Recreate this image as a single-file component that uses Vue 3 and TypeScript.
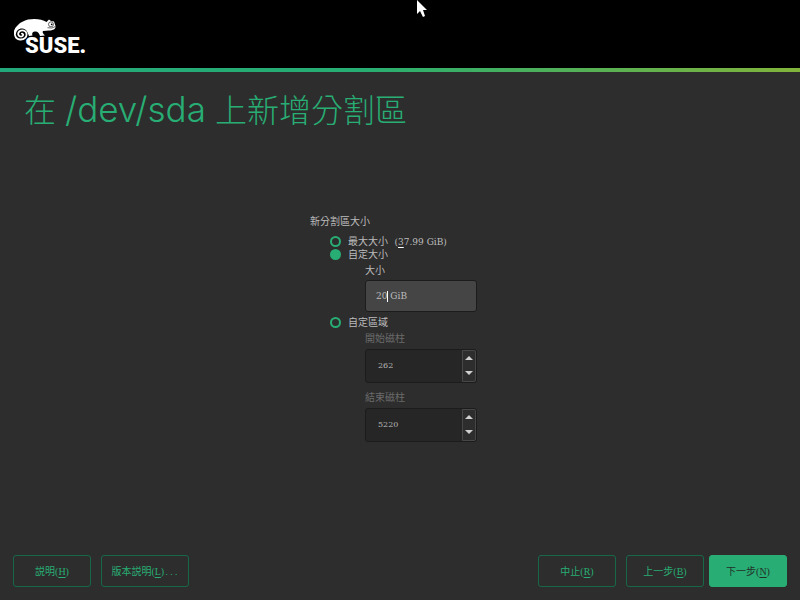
<script setup lang="ts">
import { ref } from 'vue'

type Mode = 'max' | 'size' | 'region'

const mode = ref<Mode>('size')
const size = ref('20 GiB')
const start = ref(262)
const end = ref(5220)
</script>

<template>
  <div class="installer">
    <header class="banner">
      <svg class="logo" width="76" height="40" viewBox="0 0 76 40" role="img" aria-label="SUSE">
        <path
          fill="#fff"
          d="M0 16C0 9 6 3.500 14 1.500C21 0.300 28 1 32.500 4L35 1.500L37 3L40 3.500L41.500 8C42 11 39 12.500 35 12.500L29 13C28 14 29 16 31 17.500L26 18C25 15 24 13.500 21.500 13.500C19 13.500 17.500 15 18.500 17.500L15 18L13.500 14.500C12 11.500 10.500 10.500 8 10.500C4.500 10.500 2 13 2 16Z"
        />
        <path
          fill="none"
          stroke="#fff"
          stroke-width="1.800"
          stroke-linecap="round"
          d="M2.500 10C-0.500 14.500 0.500 21 6 21.500C10.500 21.800 13 19 12.500 15.500C12 12.500 8 11.600 5.500 13.300C3 15.500 4.500 18.800 7.200 18.700C9.600 18.500 9.800 15.900 7.900 15.700"
        />
        <circle cx="37" cy="6.300" r="2.500" fill="none" stroke="#000" stroke-width="0.600" />
        <circle cx="37.700" cy="6.300" r="0.900" fill="#000" />
        <path d="M33.500 9.700Q38 11 41.500 8.500" fill="none" stroke="#000" stroke-width="0.600" />
        <text class="wordmark" x="11" y="35">SUSE.</text>
      </svg>
    </header>
    <div class="stripe"></div>

    <h1>在 <span class="device">/dev/sda</span> 上新增分割區</h1>

    <main>
      <fieldset>
        <legend>新分割區大小</legend>
        <div class="options">
          <label class="option">
            <input v-model="mode" type="radio" name="mode" value="max" />
            <span>最大大小 <span class="amount">(<u>3</u>7.99 GiB)</span></span>
          </label>
          <label class="option">
            <input v-model="mode" type="radio" name="mode" value="size" />
            <span>自定大小</span>
          </label>
          <div class="detail">
            <label class="caption" for="size">大小</label>
            <div class="field">
              <input id="size" v-model="size" class="text" type="text" />
              <i class="caret"></i>
            </div>
          </div>
          <label class="option">
            <input v-model="mode" type="radio" name="mode" value="region" />
            <span>自定區域</span>
          </label>
          <div class="detail region">
            <label class="caption dim" for="start">開始磁柱</label>
            <div class="spin">
              <input id="start" v-model.number="start" type="number" :disabled="mode !== 'region'" />
              <div class="steps">
                <button type="button" aria-label="+" :disabled="mode !== 'region'" @click="start++">
                  <svg width="8" height="4" viewBox="0 0 8 4"><path d="M0 4L4 0L8 4Z" /></svg>
                </button>
                <button type="button" aria-label="-" :disabled="mode !== 'region'" @click="start--">
                  <svg width="8" height="4" viewBox="0 0 8 4"><path d="M0 0L4 4L8 0Z" /></svg>
                </button>
              </div>
            </div>
          </div>
          <div class="detail region last">
            <label class="caption dim" for="end">結束磁柱</label>
            <div class="spin">
              <input id="end" v-model.number="end" type="number" :disabled="mode !== 'region'" />
              <div class="steps">
                <button type="button" aria-label="+" :disabled="mode !== 'region'" @click="end++">
                  <svg width="8" height="4" viewBox="0 0 8 4"><path d="M0 4L4 0L8 4Z" /></svg>
                </button>
                <button type="button" aria-label="-" :disabled="mode !== 'region'" @click="end--">
                  <svg width="8" height="4" viewBox="0 0 8 4"><path d="M0 0L4 4L8 0Z" /></svg>
                </button>
              </div>
            </div>
          </div>
        </div>
      </fieldset>
    </main>

    <footer>
      <div class="group">
        <button type="button" class="action">説明(<u>H</u>)</button>
        <button type="button" class="action wide">版本説明(<u>L</u>)<span class="dots">...</span></button>
      </div>
      <div class="group">
        <button type="button" class="action">中止(<u>R</u>)</button>
        <div class="group steps-nav">
          <button type="button" class="action">上一步(<u>B</u>)</button>
          <button type="button" class="action primary">下一步(<u>N</u>)</button>
        </div>
      </div>
    </footer>

    <svg class="pointer" width="10" height="17" viewBox="0 0 10 17" aria-hidden="true">
      <path d="M0 0V14L3 11L6 17L8 16L6 10H10Z" fill="#fff" />
    </svg>
  </div>
</template>

<style>
body {
  margin: 0;
  background: #2d2d2d;
}
</style>

<style scoped>
.installer {
  position: relative;
  display: flex;
  flex-direction: column;
  box-sizing: border-box;
  min-height: 100vh;
  background: #2d2d2d;
  color: #bcbcbc;
  font: 10px/13px "Liberation Serif", "Noto Sans CJK TC", serif;
}
.installer * {
  box-sizing: border-box;
}
.banner {
  padding: 18px 14px 10px;
  background: #000;
}
.logo {
  display: block;
}
.wordmark {
  fill: #fff;
  font: 900 22px Roboto, sans-serif;
}
.stripe {
  height: 4px;
  background: linear-gradient(90deg, #22a97b, #27ae72 45%, #82b43b);
}
h1 {
  margin: 0;
  padding: 17px 24px 0;
  color: #28ae74;
  font: 300 32px/40px Inter, "Noto Sans CJK TC", sans-serif;
}
.device {
  font-size: 35px;
}
main {
  display: flex;
  flex: 1;
  align-items: center;
  justify-content: center;
}
fieldset {
  width: 180px;
  min-width: 0;
  margin: 0;
  padding: 0;
  border: 0;
}
legend {
  padding: 0;
}
.options {
  padding: 7px 0 0 20px;
}
.option {
  display: flex;
  align-items: center;
  gap: 7px;
  white-space: nowrap;
}
.option input {
  appearance: none;
  width: 11px;
  height: 11px;
  margin: 0;
  border: 2px solid #28ae74;
  border-radius: 50%;
}
.option input:checked {
  background: #28ae74;
}
.amount {
  padding-left: 4px;
  font-family: "DejaVu Serif", serif;
  font-size: 9px;
  line-height: 9px;
}
u {
  text-decoration-thickness: 1px;
  text-underline-offset: 2px;
}
.amount u {
  text-decoration-color: #fff;
}
.detail {
  padding: 3px 13px 4px 35px;
}
.region {
  padding-bottom: 5px;
}
.last {
  padding-bottom: 0;
}
.caption {
  display: block;
  margin-bottom: 3px;
}
.region .caption {
  margin-bottom: 4px;
}
.dim {
  color: #6b6b6b;
}
.field {
  position: relative;
}
.text {
  display: block;
  width: 100%;
  height: 32px;
  padding: 0 10px;
  border: 1px solid #1c1c1c;
  border-radius: 3px;
  outline: none;
  background: #454545;
  color: #bcbcbc;
  font: 9px/13px "DejaVu Serif", serif;
}
.caret {
  position: absolute;
  top: 11px;
  left: 22px;
  width: 1px;
  height: 11px;
  background: #fff;
}
.spin {
  display: flex;
  height: 34px;
  border: 1px solid #1c1c1c;
  border-radius: 3px;
  background: #262626;
}
.spin input {
  appearance: textfield;
  flex: 1;
  min-width: 0;
  padding: 0 12px;
  border: 0;
  background: none;
  color: #b8b8b8;
  font: 8px/13px "DejaVu Serif", serif;
}
.spin input::-webkit-inner-spin-button {
  appearance: none;
  margin: 0;
}
.steps {
  display: flex;
  flex-direction: column;
  width: 14px;
  border: 1px solid #474747;
  border-radius: 0 2px 2px 0;
  background: #2d2d2d;
}
.steps button {
  display: flex;
  flex: 1;
  align-items: center;
  justify-content: center;
  padding: 0;
  border: 0;
  background: none;
}
.steps path {
  fill: #d0d0d0;
}
footer {
  display: flex;
  justify-content: space-between;
  padding: 30px 13px 13px;
}
.group {
  display: flex;
  gap: 10px;
}
.steps-nav {
  gap: 5px;
}
.action {
  min-width: 78px;
  height: 32px;
  padding: 0 8px;
  border: 1px solid #176848;
  border-radius: 3px;
  background: none;
  color: #28ae74;
  font: inherit;
  white-space: nowrap;
}
.wide {
  min-width: 88px;
}
.dots {
  font-family: "Liberation Mono", monospace;
  font-size: 8px;
  line-height: 8px;
}
.primary {
  border-color: #28ae74;
  background: #28ae74;
  color: #232e29;
}
.pointer {
  position: absolute;
  top: 0;
  left: 417px;
}
</style>
